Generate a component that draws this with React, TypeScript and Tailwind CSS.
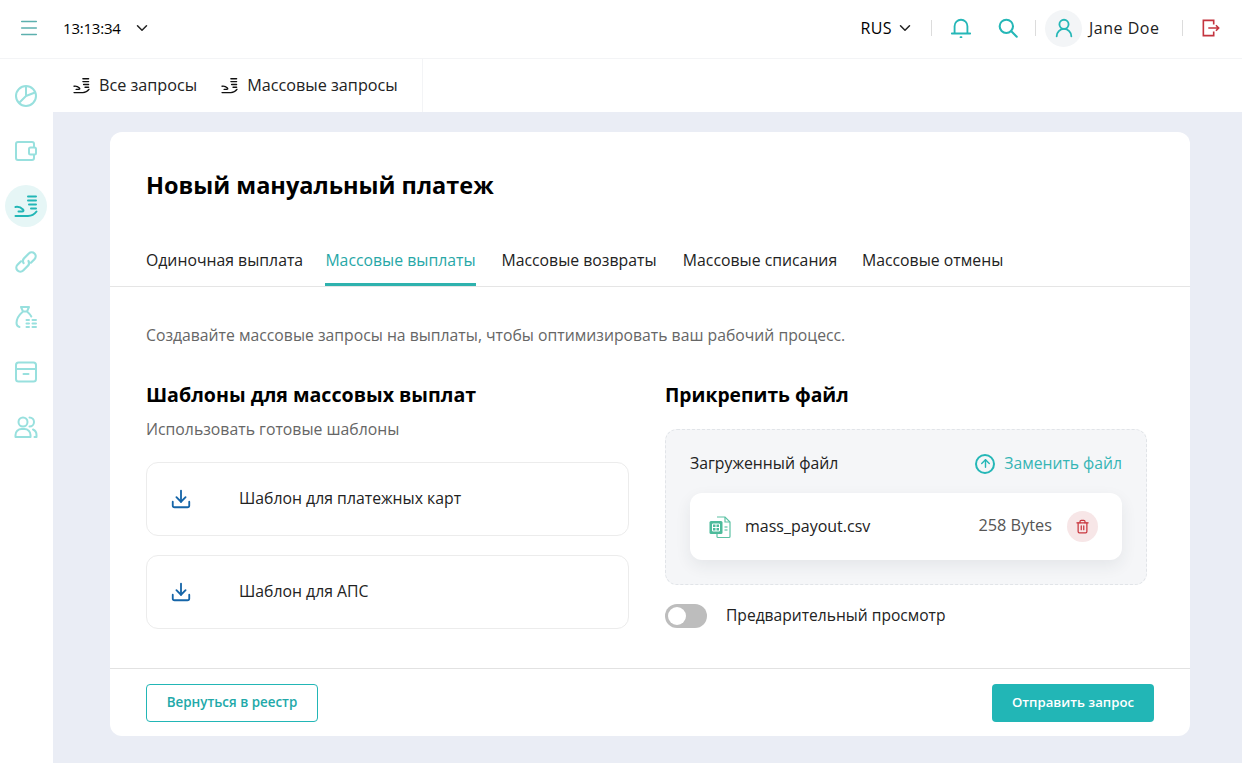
import React from 'react';
import { ChevronDown, Menu, UserRound, Download, Trash2, ArrowUp } from 'lucide-react';

const font = "font-['Open_Sans','Noto_Sans',sans-serif]";

// hand with stacked coins, used in the sidebar and sub navigation
function PayoutIcon({ className }: { className?: string }) {
  return (
    <svg viewBox="0 0 24 24" fill="none" stroke="currentColor" strokeLinecap="round" className={className}>
      <path d="M14 2.500h8M14 6.500h8M15 10.500h7M17 14.500h5" strokeWidth="2" />
      <path d="M1.500 13c3-.5 5.500.5 7.500 2.500 1 1 .5 2-1 2H4.500" strokeWidth="2" strokeLinejoin="round" />
      <path d="M1.500 22H14c3.500 0 6.500-1.800 8.500-4.500" strokeWidth="2" strokeLinejoin="round" />
    </svg>
  );
}

function SideIcon({ children, active }: { children: React.ReactNode; active?: boolean }) {
  return (
    <div className={`flex h-[42px] w-[42px] items-center justify-center rounded-full ${active ? 'bg-[#e6f6f6] text-[#22b6b6]' : 'text-[#98e0de]'}`}>
      {children}
    </div>
  );
}

function Sidebar() {
  return (
    <aside className="flex w-[53px] shrink-0 flex-col items-center gap-[13.2px] bg-white pt-[16px] pr-[1px]">
      <SideIcon>
        <svg viewBox="0 0 24 24" fill="none" stroke="currentColor" strokeWidth="2" className="h-[24px] w-[24px]">
          <circle cx="12" cy="12" r="10" />
          <path d="M12 2v10l9-3.500M12 12l-7 7" />
        </svg>
      </SideIcon>
      <SideIcon>
        <svg viewBox="0 0 24 24" fill="none" stroke="currentColor" strokeWidth="2" strokeLinejoin="round" className="h-[24px] w-[24px]">
          <path d="M20 8V5a2 2 0 0 0-2-2H4a2 2 0 0 0-2 2v14a2 2 0 0 0 2 2h14a2 2 0 0 0 2-2v-3" />
          <rect x="15" y="8.500" width="7" height="7" rx="1.500" />
        </svg>
      </SideIcon>
      <SideIcon active>
        <PayoutIcon className="h-[24px] w-[24px]" />
      </SideIcon>
      <SideIcon>
        <svg viewBox="0 0 24 24" fill="none" stroke="currentColor" strokeWidth="2.200" strokeLinecap="round" className="h-[24px] w-[24px]">
          <g transform="rotate(-45 12 12)">
            <path d="M9 8h-5a4 4 0 0 0 0 8h7a4 4 0 0 0 3.500-3" />
            <path d="M15 16h5a4 4 0 0 0 0-8h-7a4 4 0 0 0-3.500 3" />
          </g>
        </svg>
      </SideIcon>
      <SideIcon>
        <svg viewBox="0 0 24 24" fill="none" stroke="currentColor" strokeWidth="2" strokeLinecap="round" strokeLinejoin="round" className="h-[24px] w-[24px]">
          <path d="M7 2h8l-2 4.500H9zM9 6.500C5.500 9.500 2.500 14 2.500 18c0 2 1 3.500 3 4M13 6.500c1.800 1.500 3.300 3 4.300 5" />
          <path d="M12.500 15h2.500M18.500 15h3.500M12.500 18.500h2.500M18.500 18.500h3.500M12.500 22h2.500M18.500 22h3.500" />
        </svg>
      </SideIcon>
      <SideIcon>
        <svg viewBox="0 0 24 24" fill="none" stroke="currentColor" strokeWidth="2" strokeLinecap="round" strokeLinejoin="round" className="h-[24px] w-[24px]">
          <rect x="2" y="2.500" width="20" height="19" rx="2.500" />
          <path d="M2 9h20M9.500 14h5" />
        </svg>
      </SideIcon>
      <SideIcon>
        <svg viewBox="0 0 24 24" fill="none" stroke="currentColor" strokeWidth="2" strokeLinecap="round" strokeLinejoin="round" className="h-[24px] w-[24px]">
          <circle cx="9" cy="7" r="4.500" />
          <path d="M1.500 22v-2a6 6 0 0 1 6-6h3a6 6 0 0 1 6 6v2zM15.500 2.500a4.500 4.500 0 0 1 0 9M19 14.500a6 6 0 0 1 3.500 5.500v2h-2" />
        </svg>
      </SideIcon>
    </aside>
  );
}

function TopBar() {
  return (
    <header className="flex h-[59px] shrink-0 items-center border-b border-[#f3f4f6] bg-white pb-[2px]">
      <Menu className="ml-[18px] h-[22px] w-[22px] text-[#5cb0ae]" strokeWidth={1.6} />
      <span className="ml-[23px] w-[58px] text-[15px] tracking-[-0.2px] text-black">13:13:34</span>
      <ChevronDown className="ml-[12px] h-[18px] w-[18px] text-[#222]" strokeWidth={2} />
      <div className="ml-auto flex items-center">
        <span className="text-[16px] tracking-[0.4px] text-black">RUS</span>
        <ChevronDown className="ml-[4px] h-[18px] w-[18px] text-[#222]" strokeWidth={2} />
        <div className="ml-[17px] h-[16px] w-px bg-[#dcdcdc]" />
        <svg viewBox="0 0 24 24" fill="none" stroke="#25b7b7" strokeWidth="2" strokeLinecap="round" className="ml-[18px] h-[22px] w-[22px]">
          <path d="M5 18V10a7 7 0 0 1 14 0v8M2 18h20" />
          <path d="M11.500 22h1" />
        </svg>
        <svg viewBox="0 0 24 24" fill="none" stroke="#25b7b7" strokeWidth="2.500" strokeLinecap="round" className="ml-[26px] h-[20px] w-[20px]">
          <circle cx="10" cy="10" r="8" />
          <path d="M16 16l6.500 6.500" />
        </svg>
        <div className="ml-[17px] h-[16px] w-px bg-[#dcdcdc]" />
        <div className="ml-[9px] flex h-[37px] w-[37px] items-center justify-center rounded-full bg-[#f3f5f7]">
          <UserRound className="h-[22px] w-[22px] text-[#25b7b7]" strokeWidth={2} />
        </div>
        <span className="ml-[7px] w-[71px] text-[16px] tracking-[0.5px] whitespace-nowrap text-[#222]">Jane Doe</span>
        <div className="ml-[22px] h-[16px] w-px bg-[#dcdcdc]" />
        <svg viewBox="0 0 20 20" fill="none" stroke="#c4343f" strokeWidth="1.800" className="mr-[22px] ml-[19px] h-[18px] w-[18px]">
          <path d="M13 6V1.500H1.500v17H13V14" />
          <path d="M7 10h11.500M15.500 7l3 3-3 3" />
        </svg>
      </div>
    </header>
  );
}

function SubNav() {
  return (
    <div className="flex h-[53px] shrink-0 bg-white">
      <div className="flex w-[370px] items-center border-r border-[#f3f4f6] pl-[20px]">
        <PayoutIcon className="h-[17px] w-[17px] text-[#111]" />
        <span className="ml-[9px] text-[16.200px] text-[#222]">Все запросы</span>
        <PayoutIcon className="ml-[24px] h-[17px] w-[17px] text-[#111]" />
        <span className="ml-[9px] text-[16.200px] text-[#222]">Массовые запросы</span>
      </div>
    </div>
  );
}

const tabs = [
  { label: 'Одиночная выплата', width: 'w-[155px]' },
  { label: 'Массовые выплаты', width: 'w-[151px]' },
  { label: 'Массовые возвраты', width: 'w-[158px]' },
  { label: 'Массовые списания', width: 'w-[156px]' },
  { label: 'Массовые отмены', width: 'w-[141px]' },
];

function Tabs() {
  return (
    <div className="flex gap-[24px] border-b border-[#e5e5e5] px-[36px]">
      {tabs.map((tab, i) => (
        <div
          key={tab.label}
          className={`h-[54px] pt-[15px] text-center text-[15.800px] leading-[26px] whitespace-nowrap ${tab.width} ${i === 1 ? 'border-b-[3px] border-[#2eb2ae] text-[#27a7a7]' : 'text-[#222]'}`}
        >
          {tab.label}
        </div>
      ))}
    </div>
  );
}

function TemplateRow({ label }: { label: string }) {
  return (
    <div className="flex h-[74px] items-center rounded-[12px] border border-[#ececec] bg-white pl-[23px]">
      <Download className="h-[22px] w-[22px] text-[#1565a8]" strokeWidth={2} />
      <span className="ml-[47px] text-[15.800px] text-[#222]">{label}</span>
    </div>
  );
}

function FilePanel() {
  return (
    <div className="rounded-[12px] border border-dashed border-[#e1e4e8] bg-[#f5f6f8] px-[24px] pt-[22px] pb-[24px]">
      <div className="flex h-[24px] items-center justify-between">
        <span className="text-[15.800px] text-[#222]">Загруженный файл</span>
        <span className="flex items-center text-[15.700px] text-[#35b5b5]">
          <span className="flex h-[20px] w-[20px] items-center justify-center rounded-full border-2 border-[#25b7b7]">
            <ArrowUp className="h-[13px] w-[13px] text-[#25b7b7]" strokeWidth={2.6} />
          </span>
          <span className="ml-[9px]">Заменить файл</span>
        </span>
      </div>
      <div className="mt-[17px] flex h-[67px] items-center rounded-[12px] bg-white pr-[24px] pl-[19px] shadow-[0_6px_16px_rgba(40,50,70,0.08)]">
        <svg viewBox="0 0 22 24" className="h-[24px] w-[22px]" fill="none">
          <path d="M8 2h8l5 5v14.500a1 1 0 0 1-1 1H9a1 1 0 0 1-1-1V19" stroke="#5cc2a4" strokeWidth="1.200" />
          <path d="M16 2v5h5" stroke="#5cc2a4" strokeWidth="1.200" />
          <rect x="0.500" y="6" width="13" height="13" rx="1.500" fill="#4dbb9b" />
          <path d="M3.500 9h7v7h-7zM7 9v7M3.500 12.500h7" stroke="#fff" strokeWidth="1" />
          <path d="M15.500 12h3M15.500 15h3" stroke="#7fcfb8" strokeWidth="1.300" />
        </svg>
        <span className="mb-[2px] ml-[14px] text-[16px] text-[#222]">mass_payout.csv</span>
        <span className="mb-[2px] ml-auto text-[16.300px] text-[#555]">258 Bytes</span>
        <span className="ml-[15px] flex h-[31px] w-[31px] items-center justify-center rounded-full bg-[#f7e6e7]">
          <Trash2 className="h-[15px] w-[15px] text-[#c9373f]" strokeWidth={2} />
        </span>
      </div>
    </div>
  );
}

export default function App() {
  return (
    <div className={`flex h-[763px] flex-col overflow-hidden bg-[#eaedf5] ${font}`}>
      <TopBar />
      <div className="flex min-h-0 flex-1">
        <Sidebar />
        <div className="flex min-w-0 flex-1 flex-col">
          <SubNav />
          <main className="px-[57px] pt-[20px] pr-[52px]">
            <div className="flex h-[604px] flex-col rounded-[12px] bg-white">
              <h1 className="px-[36px] pt-[36px] text-[23.500px] leading-[34px] font-bold text-black">Новый мануальный платеж</h1>
              <div className="mt-[30px]">
                <Tabs />
              </div>
              <p className="px-[36px] pt-[37px] text-[15.750px] leading-[22px] text-[#666]">
                Создавайте массовые запросы на выплаты, чтобы оптимизировать ваш рабочий процесс.
              </p>
              <div className="mt-[36px] grid grid-cols-[483px_482px] gap-[36px] px-[36px]">
                <section>
                  <h2 className="text-[19.600px] leading-[26px] font-bold text-black">Шаблоны для массовых выплат</h2>
                  <p className="mt-[10px] text-[15.800px] leading-[22px] text-[#666]">Использовать готовые шаблоны</p>
                  <div className="mt-[22px] flex flex-col gap-[19px]">
                    <TemplateRow label="Шаблон для платежных карт" />
                    <TemplateRow label="Шаблон для АПС" />
                  </div>
                </section>
                <section>
                  <h2 className="text-[19.300px] leading-[26px] font-bold text-black">Прикрепить файл</h2>
                  <div className="mt-[21px]">
                    <FilePanel />
                  </div>
                  <div className="mt-[19px] flex items-center">
                    <div className="flex h-[24px] w-[42px] items-center rounded-full bg-[#bdbdbd] px-[3px]">
                      <div className="h-[18px] w-[18px] rounded-full bg-white" />
                    </div>
                    <span className="ml-[19px] text-[15.600px] text-[#222]">Предварительный просмотр</span>
                  </div>
                </section>
              </div>
              <div className="mt-auto flex h-[68px] items-center justify-between border-t border-[#e2e2e2] px-[36px]">
                <button className="h-[38px] w-[172px] rounded-[4px] border border-[#22b6b6] bg-white text-[13.400px] font-semibold text-[#22a9a9]">
                  Вернуться в реестр
                </button>
                <button className="h-[38px] w-[162px] rounded-[4px] bg-[#22b6b6] text-[13.200px] font-semibold text-white">
                  Отправить запрос
                </button>
              </div>
            </div>
          </main>
        </div>
      </div>
    </div>
  );
}
